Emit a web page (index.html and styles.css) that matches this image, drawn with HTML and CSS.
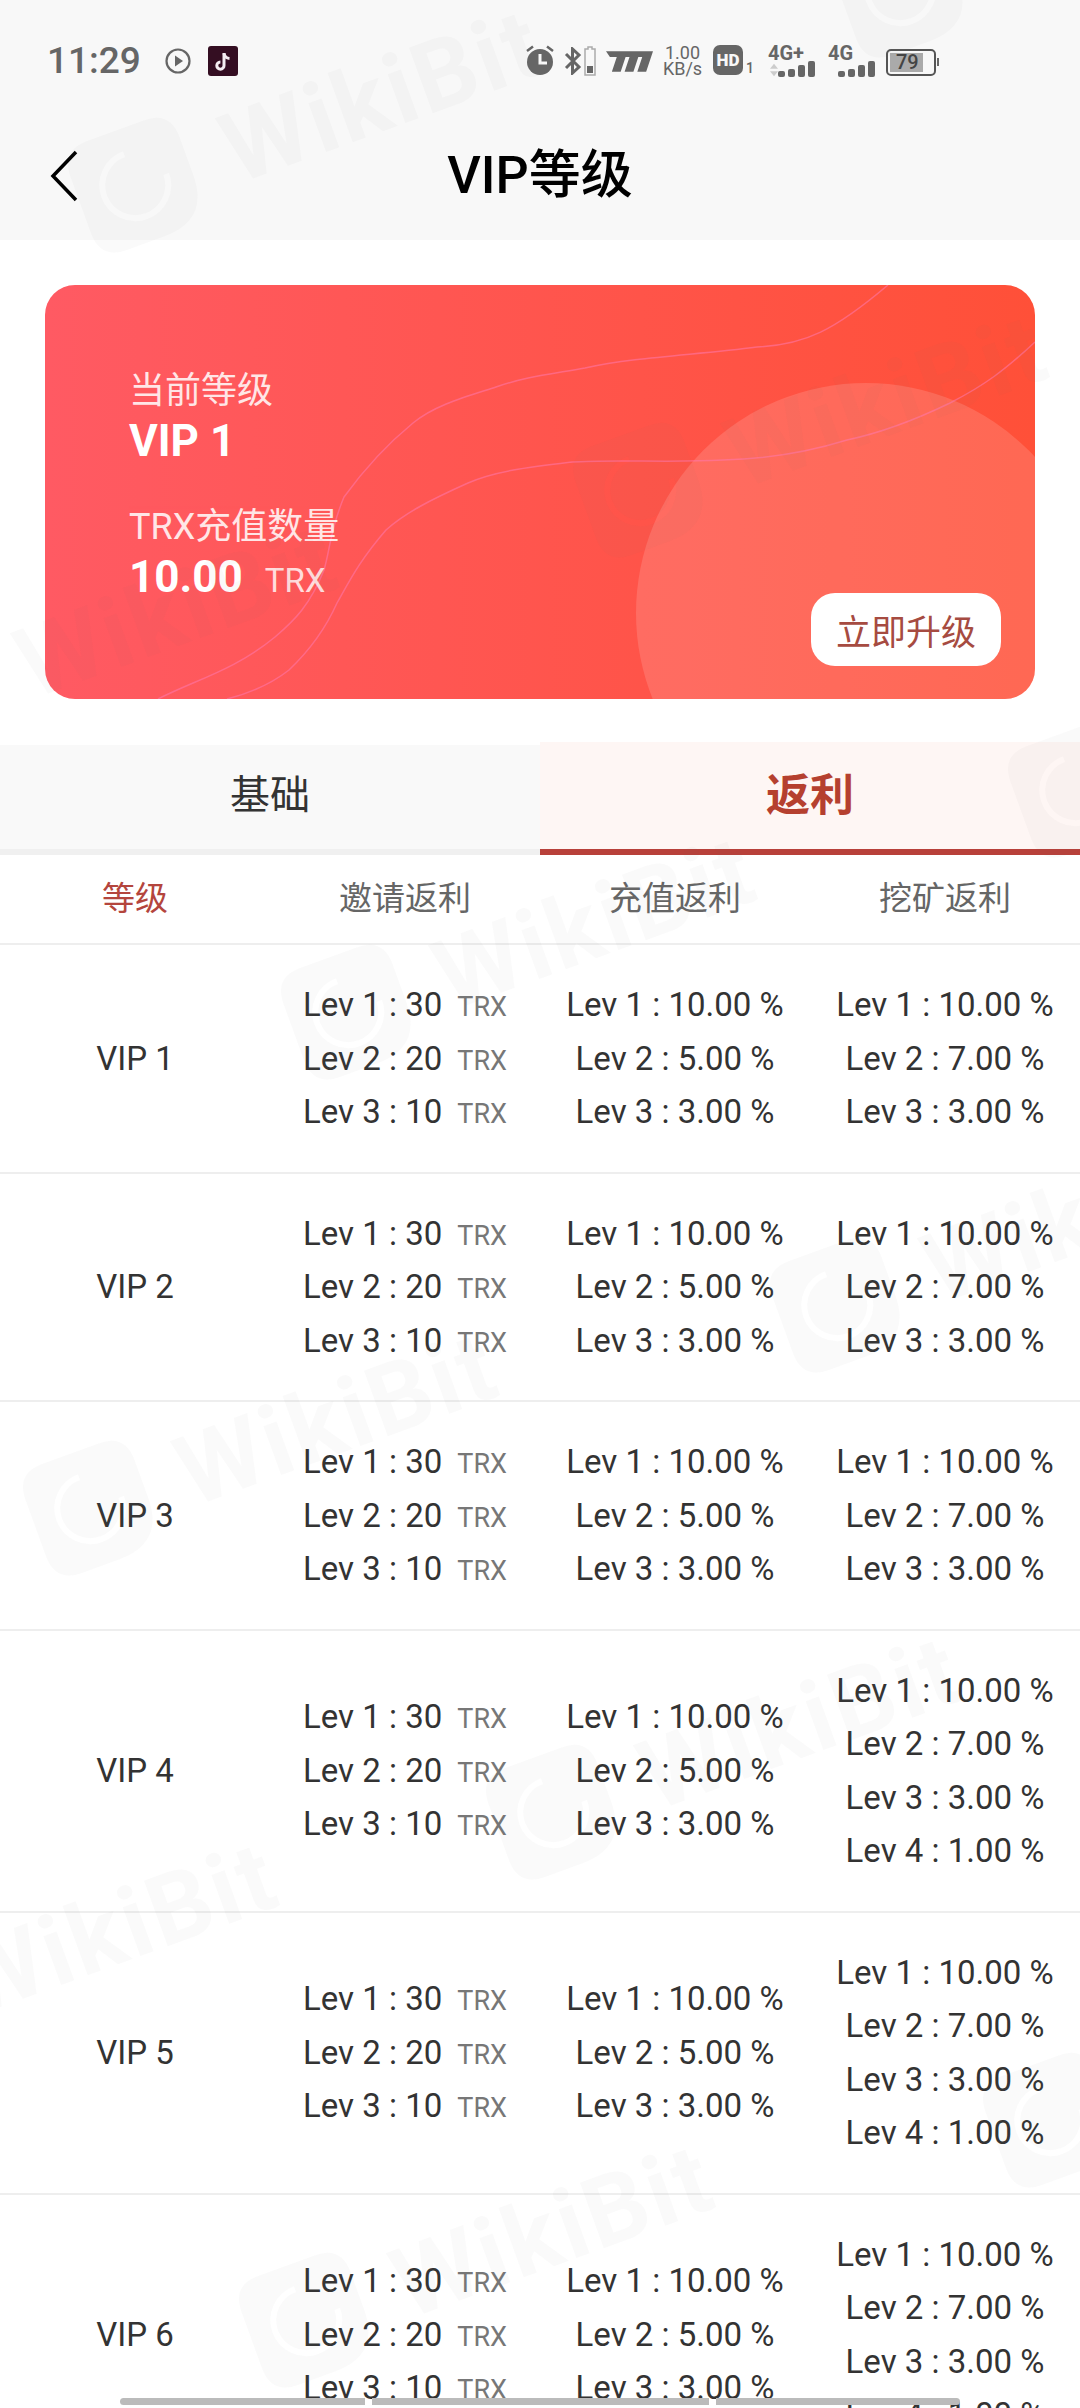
FILE: index.html
```html
<!DOCTYPE html>
<html lang="zh-CN">
<head>
    <meta charset="UTF-8">
    <meta name="viewport" content="width=device-width, initial-scale=1.0">
    <title>VIP等级</title>
    <link rel="stylesheet" href="styles.css">
</head>
<body>
    <svg width="0" height="0" class="defs">
        <symbol id="wm-logo" viewBox="0 0 120 120">
            <path fill-rule="evenodd" d="M30 2H90Q118 2 118 30V70Q118 118 70 118H30Q2 118 2 90V30Q2 2 30 2ZM60 24A36 36 0 1 0 96 60H90A30 30 0 1 1 60 30Z"/>
        </symbol>
    </svg>

    <header class="top-bar">
        <div class="status-bar">
            <div class="status-left">
                <span class="time">11:29</span>
                <svg class="ic-play" viewBox="0 0 26 26"><circle cx="13" cy="13" r="11.5" fill="none" stroke="#666" stroke-width="2.2"/><path d="M10 7.5L18 13L10 18.5Z" fill="#666"/></svg>
                <svg class="ic-tiktok" viewBox="0 0 30 30"><rect width="30" height="30" rx="3" fill="#340e22"/><path d="M16 7V19.5A3.6 3.6 0 1 1 12.4 16" fill="none" stroke="#f4eef2" stroke-width="3"/><path d="M16 7.5C16.6 10.5 18.6 12.2 21.5 12.4" fill="none" stroke="#f4eef2" stroke-width="3"/></svg>
            </div>
            <div class="status-right">
                <svg class="ic-alarm" viewBox="0 0 30 32"><circle cx="15" cy="18" r="13" fill="#666"/><path d="M15 10V19H22" fill="none" stroke="#f8f8f8" stroke-width="3"/><path d="M2 7L8 2.500M28 7L22 2.500" stroke="#666" stroke-width="2.500"/></svg>
                <svg class="ic-bt" viewBox="0 0 18 28"><path d="M2 7L15 20L8.500 26V2L15 8L2 21" fill="none" stroke="#666" stroke-width="3"/></svg>
                <svg class="ic-minibat" viewBox="0 0 12 30"><path d="M4 1H8V3H11V29H1V3H4Z" fill="none" stroke="#aaa" stroke-width="1.500"/><rect x="3" y="20" width="6" height="7" fill="#666"/></svg>
                <svg class="ic-speed" viewBox="0 0 48 22"><path d="M0 1H48L41 22H32L37 7H33L28 22H19L24 7H20L15 22H6L11 7H4Z" fill="#666"/></svg>
                <div class="net-speed"><span>1.00</span><span>KB/s</span></div>
                <div class="hd-wrap"><span class="hd">HD</span><span class="hd-num">1</span></div>
                <div class="signal signal-plus">
                    <span class="sig-label">4G+</span>
                    <div class="sig-row">
                        <svg class="ic-arrows" viewBox="0 0 9 14"><path d="M4.500 0L9 5.500H0ZM4.500 14L0 8.500H9Z" fill="#ccc"/></svg>
                        <div class="bars"><i class="b1"></i><i class="b2"></i><i class="b3"></i><i class="b4"></i></div>
                    </div>
                </div>
                <div class="signal signal-plain">
                    <span class="sig-label">4G</span>
                    <div class="sig-row">
                        <div class="bars"><i class="b1"></i><i class="b2"></i><i class="b3"></i><i class="b4"></i></div>
                    </div>
                </div>
                <div class="battery"><div class="battery-fill"></div><span class="battery-num">79</span></div>
                <div class="battery-nub"></div>
            </div>
        </div>
        <nav class="nav-bar">
            <svg class="ic-back" viewBox="0 0 28 52"><path d="M26 2L3 26L26 50" fill="none" stroke="#000" stroke-width="3.500"/></svg>
            <h1 class="nav-title">VIP等级</h1>
        </nav>
    </header>

    <section class="vip-card">
        <div class="card-circle"></div>
        <svg class="card-lines" viewBox="0 0 990 414" preserveAspectRatio="none">
            <path d="M843 0C790 45 760 60 712 62C650 70 590 72 540 83C500 90 480 92 451 102C420 112 390 120 368 138C335 165 315 190 299 212C285 245 285 265 279 285C265 320 250 335 230 352C190 385 150 395 113 414"/>
            <path d="M990 57C960 85 940 100 905 118C870 135 835 148 802 155C760 168 720 174 678 175C620 178 570 174 527 177C485 182 450 186 423 198C385 215 360 228 341 245C315 275 305 295 292 318C280 345 265 365 244 385C225 400 205 408 182 414"/>
        </svg>
        <div class="card-info">
            <p class="card-label">当前等级</p>
            <p class="card-value">VIP 1</p>
            <p class="card-label card-label-second">TRX充值数量</p>
            <p class="card-value">10.00<span class="card-unit">TRX</span></p>
        </div>
        <button class="upgrade-btn">立即升级</button>
    </section>

    <div class="tabs">
        <div class="tab">基础</div>
        <div class="tab tab-active">返利</div>
    </div>

    <div class="table-head">
        <div class="head-active">等级</div>
        <div>邀请返利</div>
        <div>充值返利</div>
        <div>挖矿返利</div>
    </div>

    <div class="row">
        <div>VIP 1</div>
        <div><p>Lev 1 : 30<span class="unit">TRX</span></p><p>Lev 2 : 20<span class="unit">TRX</span></p><p>Lev 3 : 10<span class="unit">TRX</span></p></div>
        <div><p>Lev 1 : 10.00 %</p><p>Lev 2 : 5.00 %</p><p>Lev 3 : 3.00 %</p></div>
        <div><p>Lev 1 : 10.00 %</p><p>Lev 2 : 7.00 %</p><p>Lev 3 : 3.00 %</p></div>
    </div>
    <div class="row">
        <div>VIP 2</div>
        <div><p>Lev 1 : 30<span class="unit">TRX</span></p><p>Lev 2 : 20<span class="unit">TRX</span></p><p>Lev 3 : 10<span class="unit">TRX</span></p></div>
        <div><p>Lev 1 : 10.00 %</p><p>Lev 2 : 5.00 %</p><p>Lev 3 : 3.00 %</p></div>
        <div><p>Lev 1 : 10.00 %</p><p>Lev 2 : 7.00 %</p><p>Lev 3 : 3.00 %</p></div>
    </div>
    <div class="row">
        <div>VIP 3</div>
        <div><p>Lev 1 : 30<span class="unit">TRX</span></p><p>Lev 2 : 20<span class="unit">TRX</span></p><p>Lev 3 : 10<span class="unit">TRX</span></p></div>
        <div><p>Lev 1 : 10.00 %</p><p>Lev 2 : 5.00 %</p><p>Lev 3 : 3.00 %</p></div>
        <div><p>Lev 1 : 10.00 %</p><p>Lev 2 : 7.00 %</p><p>Lev 3 : 3.00 %</p></div>
    </div>
    <div class="row">
        <div>VIP 4</div>
        <div><p>Lev 1 : 30<span class="unit">TRX</span></p><p>Lev 2 : 20<span class="unit">TRX</span></p><p>Lev 3 : 10<span class="unit">TRX</span></p></div>
        <div><p>Lev 1 : 10.00 %</p><p>Lev 2 : 5.00 %</p><p>Lev 3 : 3.00 %</p></div>
        <div><p>Lev 1 : 10.00 %</p><p>Lev 2 : 7.00 %</p><p>Lev 3 : 3.00 %</p><p>Lev 4 : 1.00 %</p></div>
    </div>
    <div class="row">
        <div>VIP 5</div>
        <div><p>Lev 1 : 30<span class="unit">TRX</span></p><p>Lev 2 : 20<span class="unit">TRX</span></p><p>Lev 3 : 10<span class="unit">TRX</span></p></div>
        <div><p>Lev 1 : 10.00 %</p><p>Lev 2 : 5.00 %</p><p>Lev 3 : 3.00 %</p></div>
        <div><p>Lev 1 : 10.00 %</p><p>Lev 2 : 7.00 %</p><p>Lev 3 : 3.00 %</p><p>Lev 4 : 1.00 %</p></div>
    </div>
    <div class="row">
        <div>VIP 6</div>
        <div><p>Lev 1 : 30<span class="unit">TRX</span></p><p>Lev 2 : 20<span class="unit">TRX</span></p><p>Lev 3 : 10<span class="unit">TRX</span></p></div>
        <div><p>Lev 1 : 10.00 %</p><p>Lev 2 : 5.00 %</p><p>Lev 3 : 3.00 %</p></div>
        <div><p>Lev 1 : 10.00 %</p><p>Lev 2 : 7.00 %</p><p>Lev 3 : 3.00 %</p><p>Lev 4 : 1.00 %</p></div>
    </div>

    <!-- screenshot watermark, sits over everything -->
    <div class="watermarks">
        <div class="wm wm-a"><svg class="wm-icon"><use href="#wm-logo"/></svg><span>WikiBit</span></div>
        <div class="wm wm-b"><svg class="wm-icon"><use href="#wm-logo"/></svg><span>WikiBit</span></div>
        <div class="wm wm-c"><svg class="wm-icon"><use href="#wm-logo"/></svg><span>WikiBit</span></div>
        <div class="wm wm-d"><svg class="wm-icon"><use href="#wm-logo"/></svg><span>WikiBit</span></div>
        <div class="wm wm-e"><svg class="wm-icon"><use href="#wm-logo"/></svg><span>WikiBit</span></div>
        <div class="wm wm-f"><svg class="wm-icon"><use href="#wm-logo"/></svg><span>WikiBit</span></div>
        <div class="wm wm-g"><svg class="wm-icon"><use href="#wm-logo"/></svg><span>WikiBit</span></div>
        <div class="wm wm-h"><svg class="wm-icon"><use href="#wm-logo"/></svg><span>WikiBit</span></div>
        <div class="wm wm-i"><svg class="wm-icon"><use href="#wm-logo"/></svg><span>WikiBit</span></div>
        <div class="wm wm-j"><svg class="wm-icon"><use href="#wm-logo"/></svg><span>WikiBit</span></div>
        <div class="wm wm-k"><svg class="wm-icon"><use href="#wm-logo"/></svg><span>WikiBit</span></div>
        <div class="wm wm-l"><svg class="wm-icon"><use href="#wm-logo"/></svg><span>WikiBit</span></div>
    </div>

    <div class="gesture-bar"><i class="seg-1"></i><i class="seg-2"></i><i class="seg-3"></i></div>
</body>
</html>
```

FILE: styles.css
```css
html, body {
    margin: 0;
    padding: 0;
    height: 2408px;
    overflow: hidden;
}
body {
    position: relative;
    background: #fff;
    color: #333;
    font-family: Roboto, "Noto Sans CJK SC", sans-serif;
}
p, h1 {
    margin: 0;
    font-weight: 400;
}
.defs {
    position: absolute;
}

/* top area */
.top-bar {
    height: 240px;
    background: #f8f8f8;
}
.status-bar {
    display: flex;
    justify-content: space-between;
    height: 120px;
    padding: 45px 141px 0 47px;
    box-sizing: border-box;
    color: #666;
}
.status-left {
    display: flex;
    align-items: center;
    height: 31px;
}
.time {
    font-size: 37px;
    font-weight: 500;
    color: #666;
}
.ic-play {
    width: 26px;
    height: 26px;
    margin-left: 24px;
}
.ic-tiktok {
    width: 30px;
    height: 30px;
    margin-left: 17px;
}
.status-right {
    display: flex;
    align-items: flex-start;
    height: 32px;
}
.ic-alarm {
    width: 30px;
    height: 32px;
    margin-top: -1px;
}
.ic-bt {
    width: 18px;
    height: 28px;
    margin: 2px 0 0 9px;
}
.ic-minibat {
    width: 12px;
    height: 30px;
    margin: 1px 0 0 2px;
}
.ic-speed {
    width: 47px;
    height: 22px;
    margin: 5px 0 0 10px;
}
.net-speed {
    display: flex;
    flex-direction: column;
    align-items: center;
    width: 37px;
    margin-left: 11px;
    font-size: 18px;
    line-height: 16px;
}
.net-speed span {
    height: 16px;
}
.hd-wrap {
    display: flex;
    align-items: flex-end;
    margin-left: 12px;
}
.hd {
    width: 30px;
    height: 30px;
    line-height: 30px;
    text-align: center;
    background: #666;
    border-radius: 7px;
    color: #f8f8f8;
    font-size: 17px;
    font-weight: 900;
}
.hd-num {
    font-size: 14px;
    line-height: 13px;
    margin-left: 3px;
    font-weight: 500;
}
.signal {
    display: flex;
    flex-direction: column;
}
.signal-plus {
    width: 47px;
    margin-left: 14px;
}
.signal-plain {
    width: 47px;
    margin-left: 13px;
}
.sig-label {
    font-size: 20px;
    font-weight: 700;
    line-height: 14px;
    margin-top: 1px;
}
.sig-row {
    display: flex;
    align-items: flex-end;
    justify-content: flex-end;
    margin-top: 1px;
    height: 16px;
}
.ic-arrows {
    width: 9px;
    height: 14px;
    margin-right: auto;
    margin-left: 2px;
}
.bars {
    display: flex;
    align-items: flex-end;
    gap: 3px;
}
.bars i {
    display: block;
    width: 7px;
    background: #666;
    border-radius: 2px;
}
.bars .b1 { height: 6px; }
.bars .b2 { height: 8px; }
.bars .b3 { height: 12px; }
.bars .b4 { height: 16px; }
.battery {
    position: relative;
    width: 50px;
    height: 27px;
    margin: 4px 0 0 11px;
    border: 2px solid #555;
    border-radius: 5px;
    box-sizing: border-box;
}
.battery-fill {
    position: absolute;
    left: 2px;
    top: 2px;
    bottom: 2px;
    width: 33px;
    background: #aaa;
}
.battery-num {
    position: absolute;
    left: 8px;
    top: 0;
    font-size: 20px;
    line-height: 23px;
    font-weight: 500;
    color: #444;
}
.battery-nub {
    width: 2px;
    height: 8px;
    margin: 13px 0 0 1px;
    background: #666;
}
.nav-bar {
    position: relative;
    display: flex;
    justify-content: center;
    align-items: center;
    height: 110px;
}
.ic-back {
    position: absolute;
    left: 50px;
    top: 30px;
    width: 28px;
    height: 52px;
}
.nav-title {
    margin-bottom: 10px;
    font-size: 52px;
    font-weight: 500;
    color: #000;
}

/* vip card */
.vip-card {
    position: relative;
    height: 414px;
    margin: 45px 45px 46px;
    overflow: hidden;
    border-radius: 30px;
    background: linear-gradient(90deg, #ff5a63, #ff5038);
}
.card-circle {
    position: absolute;
    left: 591px;
    top: 98px;
    width: 460px;
    height: 460px;
    border-radius: 50%;
    background: rgba(255, 255, 255, 0.14);
}
.card-lines {
    position: absolute;
    left: 0;
    top: 0;
    width: 100%;
    height: 100%;
}
.card-lines path {
    fill: none;
    stroke: rgba(255, 120, 175, 0.55);
    stroke-width: 1.5;
}
.card-info {
    position: relative;
    padding: 83px 0 0 84px;
    color: #fff;
}
.card-label {
    font-size: 36px;
    line-height: 46px;
    opacity: 0.85;
}
.card-label-second {
    margin-top: 36px;
}
.card-value {
    font-size: 44px;
    line-height: 54px;
    font-weight: 700;
}
.card-unit {
    margin-left: 22px;
    font-size: 33px;
    line-height: 1;
    font-weight: 400;
    opacity: 0.8;
}
.upgrade-btn {
    position: absolute;
    right: 34px;
    bottom: 33px;
    width: 190px;
    height: 73px;
    padding: 0;
    border: none;
    border-radius: 24px;
    background: #fff;
    color: #a64b41;
    font-family: inherit;
    font-size: 35px;
}

/* tabs */
.tabs {
    display: flex;
    align-items: flex-end;
    height: 110px;
}
.tab {
    flex: 1;
    height: 110px;
    box-sizing: border-box;
    line-height: 102px;
    text-align: center;
    font-size: 40px;
    color: #333;
    background: #f9f9f9;
    border-bottom: 6px solid #f0f0f0;
}
.tab-active {
    height: 113px;
    line-height: 108px;
    font-size: 44px;
    font-weight: 700;
    color: #b5402f;
    background: #fef6f4;
    border-bottom-color: #b8403a;
}

/* table */
.table-head, .row {
    display: grid;
    grid-template-columns: repeat(4, 1fr);
    align-items: center;
    text-align: center;
    border-bottom: 2px solid #eee;
}
.table-head {
    height: 90px;
    padding-bottom: 6px;
    box-sizing: border-box;
    font-size: 33px;
    color: #666;
}
.head-active {
    color: #b4453d;
}
.row {
    padding: 33px 0;
    font-size: 33px;
    line-height: 53.5px;
}
.unit {
    margin-left: 15px;
    font-size: 27px;
    line-height: 1;
    color: #777;
}

/* watermark */
.watermarks {
    position: absolute;
    left: 0;
    top: 0;
    width: 1080px;
    height: 2408px;
    overflow: hidden;
    pointer-events: none;
}
.wm {
    position: absolute;
    display: flex;
    align-items: center;
    gap: 36px;
    width: 460px;
    height: 120px;
    transform: rotate(-20deg);
    color: rgba(120, 120, 120, 0.035);
    font-family: Roboto, sans-serif;
    font-size: 98px;
    font-weight: 700;
    letter-spacing: 3px;
}
.wm-icon {
    flex: none;
    width: 120px;
    height: 120px;
    fill: currentColor;
}
.wm-a { left: 65px; top: 67px; }
.wm-b { left: 830px; top: -128px; }
.wm-c { left: 570px; top: 372px; }
.wm-d { left: -140px; top: 582px; }
.wm-e { left: 1005px; top: 672px; }
.wm-f { left: 278px; top: 894px; }
.wm-g { left: 767px; top: 1187px; }
.wm-h { left: 20px; top: 1390px; }
.wm-i { left: 483px; top: 1694px; }
.wm-j { left: -200px; top: 1900px; }
.wm-k { left: 980px; top: 2002px; }
.wm-l { left: 236px; top: 2202px; }

.gesture-bar {
    position: absolute;
    left: 120px;
    top: 2398px;
    display: flex;
    gap: 7px;
    width: 840px;
    height: 7px;
}
.gesture-bar i {
    display: block;
    height: 7px;
    background: #bbb;
}
.seg-1 { width: 245px; border-radius: 4px 0 0 4px; }
.seg-2 { width: 337px; }
.seg-3 { width: 244px; border-radius: 0 4px 4px 0; }
```
